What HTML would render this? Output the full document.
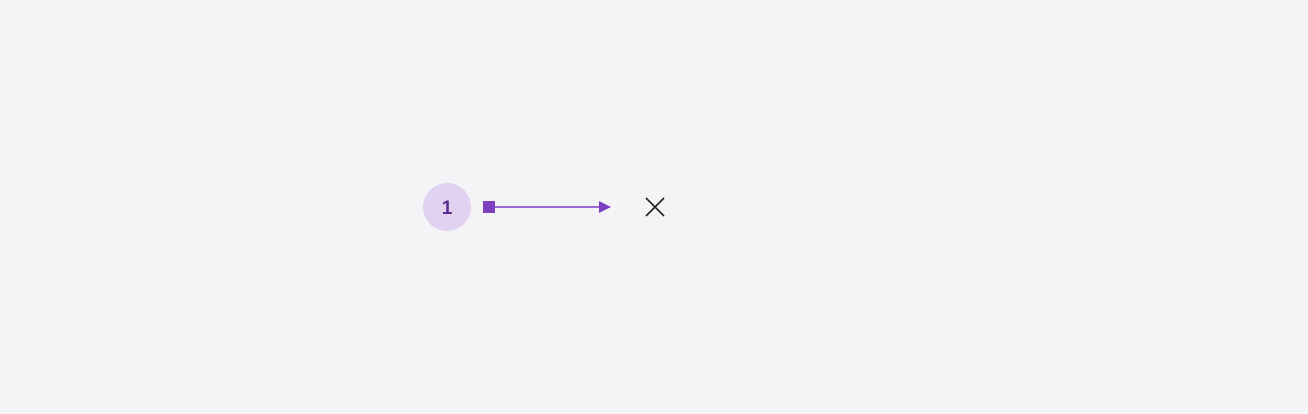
<!DOCTYPE html>
<html><head><style>
html,body{margin:0;padding:0;}
body{width:1308px;height:414px;background:#f4f4f7;position:relative;overflow:hidden;font-family:"Liberation Sans",sans-serif;}
.c{position:absolute;left:423px;top:183px;width:48px;height:48px;border-radius:50%;background:#e1d3f0;color:#5b2d91;font-weight:bold;font-size:19px;line-height:52px;text-align:center;}
svg{position:absolute;left:0;top:0;}
</style></head><body>
<div class="c">1</div>
<svg width="1308" height="414">
<rect x="483" y="201" width="12" height="12" fill="#7b3fbf"/>
<line x1="495" y1="207" x2="600" y2="207" stroke="#7b3fbf" stroke-width="1.5"/>
<polygon points="599,201 611,207 599,213" fill="#7b3fbf"/>
<path d="M646 198 L664 216 M664 198 L646 216" stroke="#222" stroke-width="1.6" fill="none"/>
</svg>
</body></html>
